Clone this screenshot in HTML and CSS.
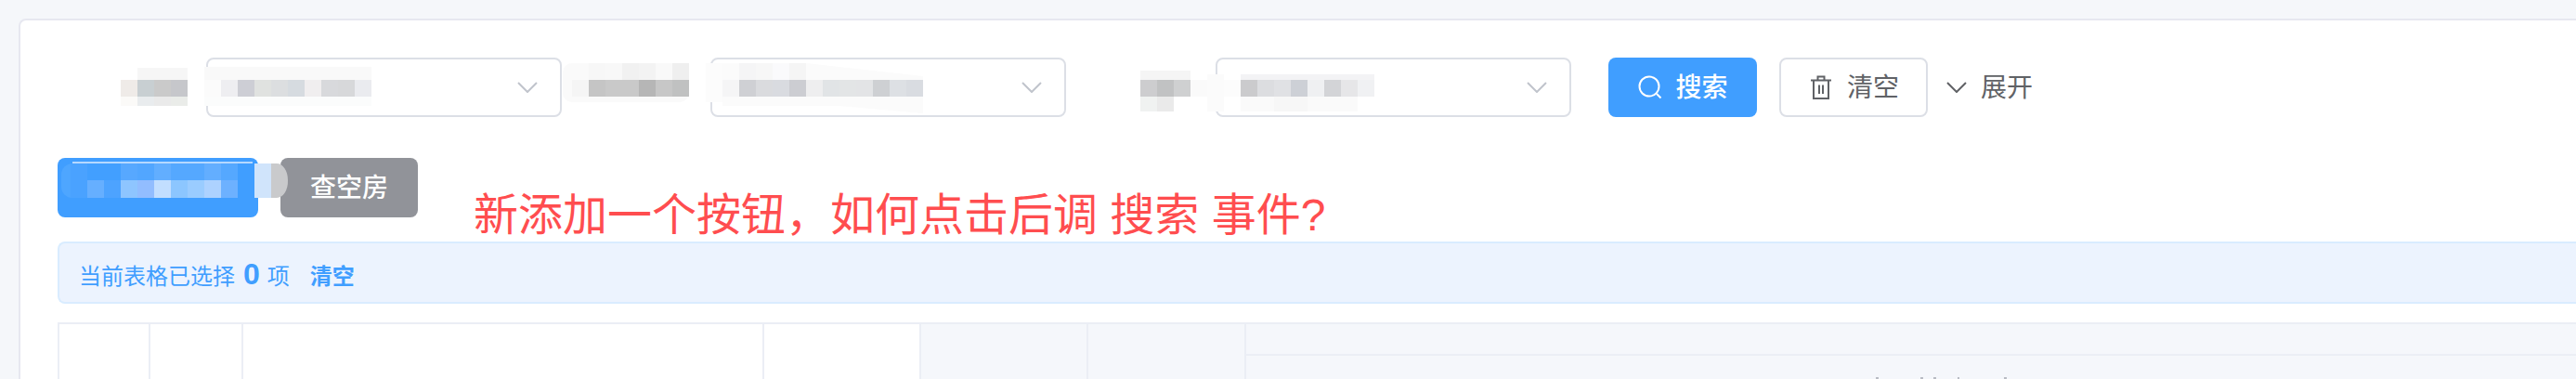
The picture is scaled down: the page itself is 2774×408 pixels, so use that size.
FILE: index.html
```html
<!doctype html>
<html lang="zh-CN">
	<head>
		<meta charset="utf-8">
		<meta name="viewport" content="width=device-width, initial-scale=1">
		<title>查空房</title>

		<link rel="stylesheet" href="styles.css">
	</head>
	<body>
		<div class="card">
			<form class="searchForm">
				<div class="field">
					<label class="fieldLabel labelFirst"></label>
					<div class="select">
						<svg class="chevron" viewBox="0 0 22 12"><path d="M1 1l10 10L21 1"/></svg>
					</div>
				</div>
				<div class="field">
					<label class="fieldLabel labelSecond"></label>
					<div class="select">
						<svg class="chevron" viewBox="0 0 22 12"><path d="M1 1l10 10L21 1"/></svg>
					</div>
				</div>
				<div class="field">
					<label class="fieldLabel labelThird"></label>
					<div class="select selectLast">
						<svg class="chevron" viewBox="0 0 22 12"><path d="M1 1l10 10L21 1"/></svg>
					</div>
				</div>
				<button type="button" class="btn btnPrimary">
					<svg class="btnIcon" viewBox="0 0 28 28"><circle cx="13" cy="13" r="10.5"/><path d="M21 21l4.5 4.5"/></svg>
					搜索
				</button>
				<button type="button" class="btn btnDefault">
					<svg class="btnIcon" viewBox="0 0 28 28"><path d="M3 6.5h22M6 6.5V26h16V6.5M10.5 6.5v-4h7v4M12 11.5V21M16 11.5V21"/></svg>
					清空
				</button>
				<a class="expand">
					<svg class="expandIcon" viewBox="0 0 22 12"><path d="M1 1l10 10L21 1"/></svg>
					展开
				</a>
			</form>

			<div class="toolbar">
				<button type="button" class="btn btnAdd"></button>
				<button type="button" class="btn btnGray">查空房</button>
			</div>

			<div class="alert">
				<span>当前表格已选择</span>
				<b class="alertCount">0</b>
				<span>项</span>
				<a class="alertClear">清空</a>
			</div>

			<div class="table">
				<div class="col colA"></div>
				<div class="col colB"></div>
				<div class="col colC"></div>
				<div class="col colD"></div>
				<div class="col colE shaded"></div>
				<div class="col colF shaded"></div>
				<div class="col colLast shaded">
					<div class="subHead"></div>
				</div>
			</div>
		</div>

		<p class="note">新添加一个按钮，如何点击后调 搜索 事件?</p>

		<!-- mosaic over the hidden labels and values -->
		<svg class="redact" viewBox="0 0 2774 408">
			<g>
				<rect x="148" y="73" width="54" height="13" fill="#f6f6f6"/>
				<rect x="130" y="104" width="18" height="10" fill="#fbfaf8"/>
				<rect x="148" y="104" width="18" height="10" fill="#e9ecee"/>
				<rect x="166" y="104" width="18" height="10" fill="#eaeaea"/>
				<rect x="184" y="104" width="18" height="10" fill="#eaece9"/>
				<rect x="130" y="86" width="18" height="18" fill="#efebe8"/>
				<rect x="148" y="86" width="18" height="18" fill="#c8cfd2"/>
				<rect x="166" y="86" width="18" height="18" fill="#cacaca"/>
				<rect x="184" y="86" width="18" height="18" fill="#c6c7cb"/>
			</g>
			<g>
				<rect x="220" y="72" width="180" height="14" fill="#f9f9f9"/>
				<rect x="220" y="104" width="180" height="10" fill="#fbfcfc"/>
				<rect x="220" y="86" width="18" height="18" fill="#fbfbfb"/>
				<rect x="238" y="86" width="18" height="18" fill="#eeeef1"/>
				<rect x="256" y="86" width="18" height="18" fill="#cdced5"/>
				<rect x="274" y="86" width="18" height="18" fill="#e0e2e0"/>
				<rect x="292" y="86" width="18" height="18" fill="#dcdee0"/>
				<rect x="310" y="86" width="18" height="18" fill="#d6dbe0"/>
				<rect x="328" y="86" width="18" height="18" fill="#f0eeef"/>
				<rect x="346" y="86" width="18" height="18" fill="#d8d9dc"/>
				<rect x="364" y="86" width="18" height="18" fill="#d7d8da"/>
				<rect x="382" y="86" width="18" height="18" fill="#eaebef"/>
			</g>
			<g>
				<rect x="606" y="68" width="136" height="42" rx="10" fill="#fafafa"/>
				<rect x="634" y="68" width="18" height="18" fill="#f7f7f7"/>
				<rect x="652" y="68" width="18" height="18" fill="#f8f8f8"/>
				<rect x="670" y="68" width="18" height="18" fill="#f1f1f1"/>
				<rect x="688" y="68" width="18" height="18" fill="#f3f3f3"/>
				<rect x="706" y="68" width="18" height="18" fill="#f9f9f9"/>
				<rect x="724" y="68" width="18" height="18" fill="#efefef"/>
				<rect x="616" y="86" width="18" height="18" fill="#f5f5f5"/>
				<rect x="634" y="86" width="18" height="18" fill="#c5c5c5"/>
				<rect x="652" y="86" width="36" height="18" fill="#c9c9c9"/>
				<rect x="688" y="86" width="18" height="18" fill="#b6b6b6"/>
				<rect x="706" y="86" width="18" height="18" fill="#c7c7c7"/>
				<rect x="724" y="86" width="18" height="18" fill="#c0c1c1"/>
			</g>
			<g>
				<rect x="760" y="68" width="18" height="42" fill="#fcfcfc"/>
				<path d="M778 68h90l126 14v4H778zM778 104h216v18l-90-8H778z" fill="#fbfbfb"/>
				<rect x="796" y="68" width="18" height="18" fill="#f5f5f6"/>
				<rect x="814" y="68" width="18" height="18" fill="#f7f7f7"/>
				<rect x="832" y="68" width="18" height="18" fill="#fafafc"/>
				<rect x="850" y="68" width="18" height="18" fill="#f5f5f5"/>
				<rect x="778" y="86" width="18" height="18" fill="#f5f5f6"/>
				<rect x="796" y="86" width="18" height="18" fill="#cfd0d4"/>
				<rect x="814" y="86" width="18" height="18" fill="#dadbde"/>
				<rect x="832" y="86" width="18" height="18" fill="#d9dbe0"/>
				<rect x="850" y="86" width="18" height="18" fill="#cccdd2"/>
				<rect x="868" y="86" width="18" height="18" fill="#eeeeef"/>
				<rect x="886" y="86" width="18" height="18" fill="#e1e4e6"/>
				<rect x="904" y="86" width="18" height="18" fill="#e3e5e6"/>
				<rect x="922" y="86" width="18" height="18" fill="#e3e4e6"/>
				<rect x="940" y="86" width="18" height="18" fill="#ced0d3"/>
				<rect x="958" y="86" width="18" height="18" fill="#dde0e4"/>
				<rect x="976" y="86" width="18" height="18" fill="#d9dce1"/>
			</g>
			<g>
				<rect x="1228" y="76" width="54" height="10" fill="#f5f5f5"/>
				<rect x="1228" y="86" width="18" height="18" fill="#cdcdcf"/>
				<rect x="1246" y="86" width="18" height="18" fill="#c1c2c3"/>
				<rect x="1264" y="86" width="18" height="18" fill="#cfd0d1"/>
				<rect x="1282" y="86" width="36" height="18" fill="#fafafa"/>
				<rect x="1300" y="80" width="18" height="40" fill="#fbfbfb"/>
				<rect x="1228" y="104" width="18" height="16" fill="#f0f2f1"/>
				<rect x="1246" y="104" width="18" height="16" fill="#eaeaea"/>
				<rect x="1318" y="86" width="18" height="18" fill="#fcfcfc"/>
			</g>
			<g>
				<rect x="1336" y="80" width="144" height="6" fill="#f3f3f5"/>
				<rect x="1336" y="104" width="126" height="16" fill="#fafafa"/>
				<rect x="1372" y="104" width="36" height="16" fill="#f7f7f7"/>
				<rect x="1336" y="86" width="18" height="18" fill="#cbcbcd"/>
				<rect x="1354" y="86" width="18" height="18" fill="#dcdde0"/>
				<rect x="1372" y="86" width="18" height="18" fill="#e0e1e4"/>
				<rect x="1390" y="86" width="18" height="18" fill="#cdd0d6"/>
				<rect x="1408" y="86" width="18" height="18" fill="#eff0f2"/>
				<rect x="1426" y="86" width="18" height="18" fill="#d3d4d7"/>
				<rect x="1444" y="86" width="18" height="18" fill="#e6e6e8"/>
				<rect x="1462" y="86" width="18" height="18" fill="#f0f1f3"/>
			</g>
			<g>
				<rect x="66" y="176" width="30" height="37" rx="12" fill="#4ea6ff"/>
				<rect x="78" y="174" width="194" height="2" fill="#b5d8ff"/>
				<rect x="76" y="176" width="18" height="37" fill="#4aa2ff"/>
				<rect x="94" y="176" width="36" height="18" fill="#429fff"/>
				<rect x="130" y="176" width="18" height="18" fill="#57a8ff"/>
				<rect x="148" y="176" width="18" height="18" fill="#52a6ff"/>
				<rect x="166" y="176" width="18" height="18" fill="#62aeff"/>
				<rect x="184" y="176" width="36" height="18" fill="#55a8ff"/>
				<rect x="220" y="176" width="18" height="18" fill="#63aeff"/>
				<rect x="238" y="176" width="18" height="18" fill="#55a8ff"/>
				<rect x="94" y="194" width="18" height="19" fill="#66afff"/>
				<rect x="112" y="194" width="18" height="19" fill="#4da3ff"/>
				<rect x="130" y="194" width="18" height="19" fill="#8ec5ff"/>
				<rect x="148" y="194" width="18" height="19" fill="#92bdff"/>
				<rect x="166" y="194" width="18" height="19" fill="#c2deff"/>
				<rect x="184" y="194" width="18" height="19" fill="#8cc6ff"/>
				<rect x="202" y="194" width="18" height="19" fill="#9accff"/>
				<rect x="220" y="194" width="18" height="19" fill="#add2ff"/>
				<rect x="238" y="194" width="18" height="19" fill="#6db1ff"/>
				<rect x="274" y="176" width="18" height="37" fill="#d0e4fb"/>
				<path d="M292 176h6a12 18 0 0 1 12 18a12 18 0 0 1-12 19h-6z" fill="#c9cacc"/>
			</g>
			<g fill="#b9bcc4">
				<rect x="2020" y="406" width="3" height="2"/>
				<rect x="2068" y="406" width="3" height="2"/>
				<rect x="2082" y="406" width="3" height="2"/>
				<rect x="2108" y="406" width="2" height="2"/>
				<rect x="2158" y="406" width="3" height="2"/>
			</g>
		</svg>
	</body>
</html>
```

FILE: styles.css
```css
body {
	position: relative;
	height: 408px;
	margin: 0;
	padding: 20px 0 0 20px;
	box-sizing: border-box;
	overflow: hidden;
	background: #f5f7fa;
	font-family: "Noto Sans CJK SC", "Liberation Sans", sans-serif;
	font-size: 28px;
	color: #606266;
}

.card {
	height: 388px;
	box-sizing: border-box;
	padding: 40px 0 0 40px;
	background: #fff;
	border-top: 2px solid #e7e8f0;
	border-left: 2px solid #e7e8f0;
	border-top-left-radius: 8px;
}

.searchForm {
	display: flex;
	align-items: center;
	height: 64px;
	margin-left: -40px;
}

.field {
	display: flex;
	align-items: center;
}

.fieldLabel {
	display: block;
}

.labelFirst {
	width: 200px;
}

.labelSecond {
	width: 160px;
}

.labelThird {
	width: 161px;
}

.select {
	display: flex;
	align-items: center;
	justify-content: flex-end;
	width: 383px;
	height: 64px;
	box-sizing: border-box;
	padding-right: 24px;
	border: 2px solid #dcdfe6;
	border-radius: 8px;
}

.chevron {
	width: 22px;
	height: 12px;
	fill: none;
	stroke: #c0c4cc;
	stroke-width: 2;
}

.selectLast {
	margin-right: 40px;
}

.btn {
	display: flex;
	align-items: center;
	justify-content: center;
	height: 64px;
	box-sizing: border-box;
	padding: 0 0 4px;
	border: 0;
	border-radius: 8px;
	font: inherit;
	color: #fff;
}

.btnPrimary {
	width: 160px;
	margin-right: 24px;
	background: #409eff;
	font-weight: 500;
}

.btnPrimary .btnIcon {
	margin-right: 13px;
	stroke: #fff;
}

.btnDefault {
	width: 160px;
	background: #fff;
	border: 2px solid #dcdfe6;
	color: #606266;
}

.btnIcon {
	width: 28px;
	height: 28px;
	margin: 4px 14px 0 0;
	fill: none;
	stroke: #606266;
	stroke-width: 2;
}

.expand {
	display: flex;
	align-items: center;
	margin-left: 20px;
	padding-bottom: 4px;
}

.expandIcon {
	width: 22px;
	height: 12px;
	margin: 4px 15px 0 0;
	fill: none;
	stroke: #606266;
	stroke-width: 2;
}

.toolbar {
	display: flex;
	gap: 24px;
	margin-top: 44px;
}

.btnAdd {
	width: 216px;
	background: #409eff;
}

.btnGray {
	width: 148px;
	background: #919399;
	font-weight: 500;
}

.alert {
	display: flex;
	align-items: center;
	height: 67px;
	box-sizing: border-box;
	margin-top: 26px;
	padding: 4px 0 0 21px;
	background: #ecf3fe;
	border: 2px solid #d9ecff;
	border-right: 0;
	border-radius: 8px 0 0 8px;
	font-size: 24px;
	color: #409eff;
}

.alertCount {
	margin: 0 8px 0 9px;
	font-family: "Liberation Sans", sans-serif;
	font-size: 32px;
}

.alertClear {
	margin-left: 22px;
	font-weight: 700;
}

.table {
	display: flex;
	height: 61px;
	box-sizing: border-box;
	margin-top: 20px;
	border-top: 2px solid #ebeef5;
	border-left: 2px solid #ebeef5;
}

.col {
	box-sizing: border-box;
	border-right: 2px solid #ebeef5;
}

.colA {
	width: 98px;
}

.colB {
	width: 100px;
}

.colC {
	width: 561px;
}

.colD {
	width: 169px;
}

.colE {
	width: 180px;
}

.colF {
	width: 170px;
}

.colLast {
	flex: 1;
	border-right: 0;
}

.shaded {
	background: #f5f7fb;
}

.subHead {
	height: 32px;
	border-bottom: 2px solid #ebeef5;
}

.note {
	position: absolute;
	left: 510px;
	top: 197px;
	margin: 0;
	font-family: "Liberation Sans", "Noto Sans CJK SC", sans-serif;
	font-size: 48px;
	line-height: 70px;
	color: #ff4d4f;
	white-space: nowrap;
}

.redact {
	position: absolute;
	left: 0;
	top: 0;
	width: 2774px;
	height: 408px;
}
```
